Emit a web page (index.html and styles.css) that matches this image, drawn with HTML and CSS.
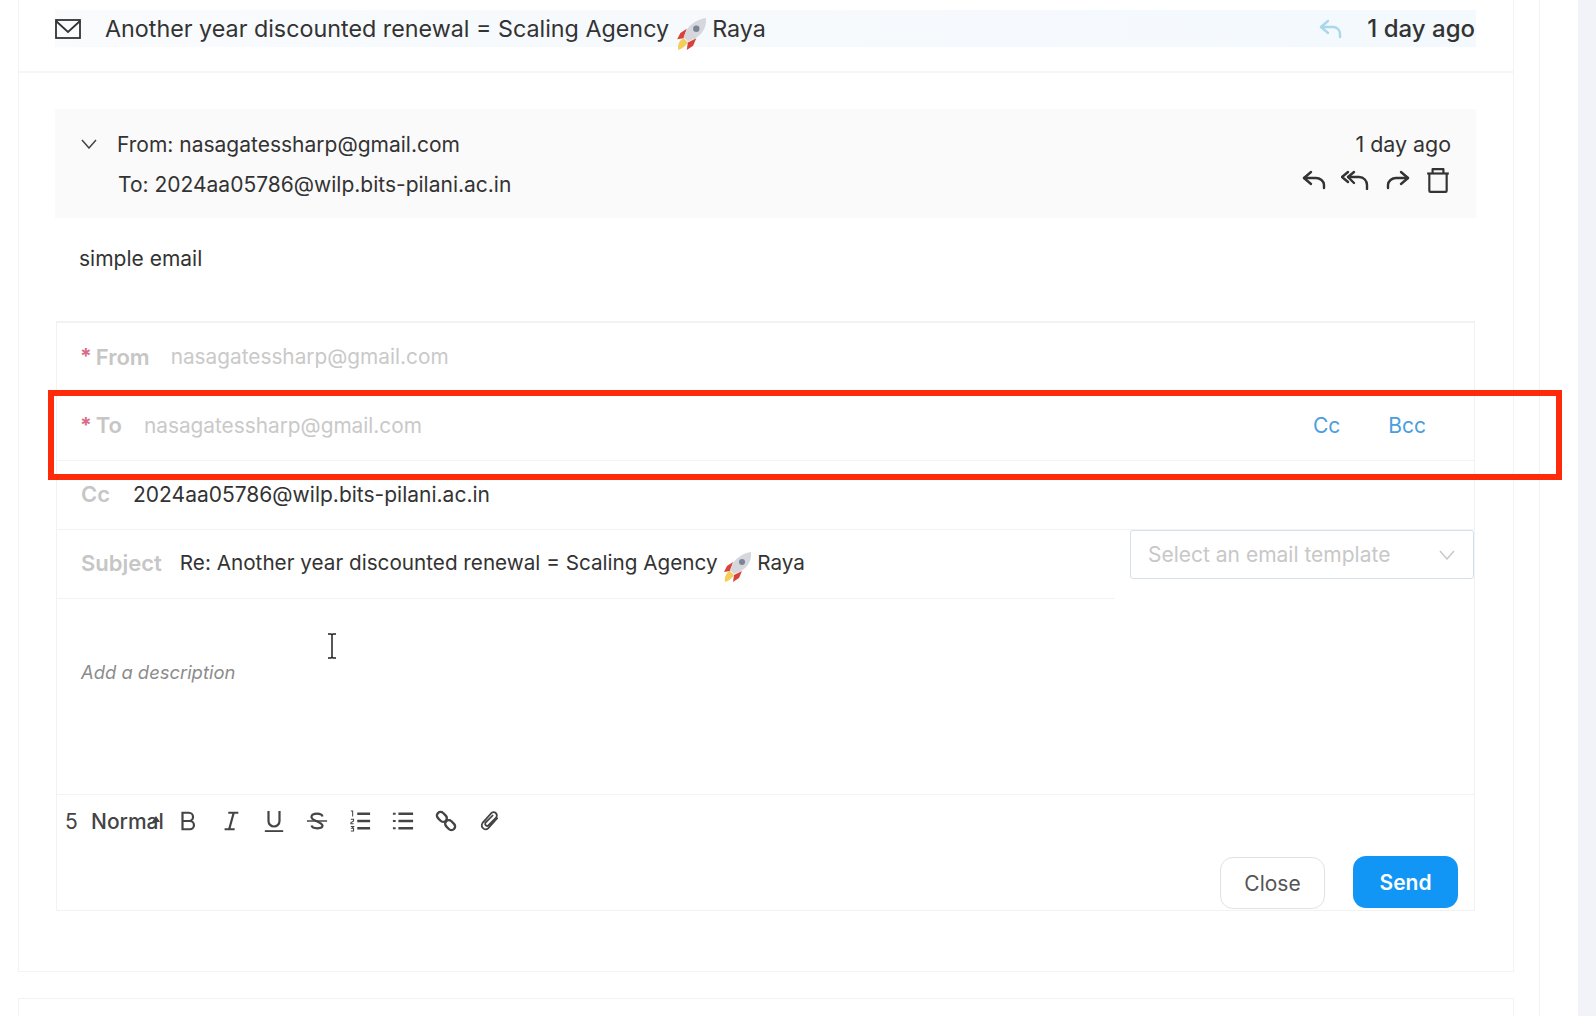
FILE: index.html
```html
<!DOCTYPE html>
<html lang="en">
<head>
    <meta charset="UTF-8">
    <meta name="viewport" content="width=device-width, initial-scale=1.0">
    <title>Email thread</title>
    <link rel="stylesheet" href="styles.css">
</head>
<body>
    <div class="page">
        <main class="thread">
            <section class="card">
                <div class="card-head">
                    <div class="subject-bar">
                        <svg class="mail-icon" viewBox="0 0 26 20" fill="none" stroke="#333" stroke-width="1.800"><rect x="1" y="1" width="24" height="18"/><path d="M1 2l12 11L25 2"/></svg>
                        <span class="subject-text">Another year discounted renewal = Scaling Agency
                            <svg class="rocket" viewBox="0 0 32 32"><path d="M4 31c-1-5 1-9 5-11l4 4c-2 3-5 6-9 7z" fill="#f2cf5b"/><path d="M6 15l6-4-3 9-6 1z" fill="#d9423a"/><path d="M18 27l3-7-8 4-1 7z" fill="#d9423a"/><path d="M30 1c1 8-3 15-10 19l-7 3-4-4 3-7C16 6 23 2 30 1z" fill="#d5d7dd"/><circle cx="21" cy="11" r="3" fill="#7b8494"/></svg>
                            Raya</span>
                        <svg class="reply-faded" viewBox="0 0 24 20" fill="none" stroke="#a9d7ec" stroke-width="2.4" stroke-linecap="round" stroke-linejoin="round"><path d="M9 2L2 8l7 6"/><path d="M2 8h12c4 0 7 3 7 7v3"/></svg>
                        <span class="subject-time">1 day ago</span>
                    </div>
                </div>

                <div class="card-body">
                    <div class="message-meta">
                        <div class="meta-left">
                            <div class="meta-from">
                                <svg class="chevron" viewBox="0 0 16 10" fill="none" stroke="#444" stroke-width="1.5"><path d="M1 1l7 8 7-8"/></svg>
                                <span>From: nasagatessharp@gmail.com</span>
                            </div>
                            <div class="meta-to">To: 2024aa05786@wilp.bits-pilani.ac.in</div>
                        </div>
                        <div class="meta-right">
                            <div class="meta-time">1 day ago</div>
                            <div class="meta-actions">
                                <svg class="reply-icon" viewBox="0 0 24 20" fill="none" stroke="#333" stroke-width="2.4" stroke-linecap="round" stroke-linejoin="round"><path d="M9 2L2 8l7 6"/><path d="M2 8h12c4 0 8 3 8 7v3"/></svg>
                                <svg class="reply-all-icon" viewBox="0 0 28 20" fill="none" stroke="#333" stroke-width="2.4" stroke-linecap="round" stroke-linejoin="round"><path d="M7 2L1 7l6 5"/><path d="M13 2L7 7l6 6"/><path d="M7 7h11c5 0 8 4 8 8v4"/></svg>
                                <svg class="forward-icon" viewBox="0 0 24 20" fill="none" stroke="#333" stroke-width="2.4" stroke-linecap="round" stroke-linejoin="round"><path d="M15 2l7 6-7 6"/><path d="M22 8H10c-4 0-8 3-8 7v3"/></svg>
                                <svg class="trash-icon" viewBox="0 0 22 24" fill="none" stroke="#333" stroke-width="2" stroke-linejoin="round"><path d="M1 6h20"/><path d="M6 6V2h10v4"/><path d="M3 6v16a1 1 0 001 1h14a1 1 0 001-1V6"/></svg>
                            </div>
                        </div>
                    </div>

                    <p class="message-text">simple email</p>

                    <form class="reply-form">
                        <div class="form-row row-from">
                            <span class="req">*</span><label class="form-label label-from">From</label>
                            <span class="placeholder">nasagatessharp@gmail.com</span>
                        </div>
                        <div class="form-row">
                            <span class="req">*</span><label class="form-label label-to">To</label>
                            <span class="placeholder">nasagatessharp@gmail.com</span>
                            <div class="copy-links">
                                <a class="copy-link">Cc</a>
                                <a class="copy-link">Bcc</a>
                            </div>
                        </div>
                        <div class="form-row">
                            <label class="form-label label-cc">Cc</label>
                            <span class="value">2024aa05786@wilp.bits-pilani.ac.in</span>
                        </div>
                        <div class="subject-line">
                            <div class="form-row subject-row">
                                <label class="form-label label-subject">Subject</label>
                                <span class="value subject-value">Re: Another year discounted renewal = Scaling Agency
                                    <svg class="rocket rocket-small" viewBox="0 0 32 32"><path d="M4 31c-1-5 1-9 5-11l4 4c-2 3-5 6-9 7z" fill="#f2cf5b"/><path d="M6 15l6-4-3 9-6 1z" fill="#d9423a"/><path d="M18 27l3-7-8 4-1 7z" fill="#d9423a"/><path d="M30 1c1 8-3 15-10 19l-7 3-4-4 3-7C16 6 23 2 30 1z" fill="#d5d7dd"/><circle cx="21" cy="11" r="3" fill="#7b8494"/></svg>
                                    Raya</span>
                            </div>
                            <div class="template-select">
                                <span>Select an email template</span>
                                <svg class="select-arrow" viewBox="0 0 16 10" fill="none" stroke="#c8c8c8" stroke-width="1.5"><path d="M1 1l7 8 7-8"/></svg>
                            </div>
                        </div>
                        <div class="editor"><em>Add a description</em></div>
                        <div class="toolbar">
                            <span class="tool-size">5</span>
                            <span class="tool-format">Normal<svg class="format-arrow" viewBox="0 0 10 8"><path d="M1 7l4-6 4 6z" fill="#444"/></svg></span>
                            <svg class="tool" viewBox="0 0 24 24" fill="none" stroke="#444" stroke-width="2.4"><path d="M6 3h7a4.500 4.500 0 010 9H6zM6 12h8a4.500 4.500 0 010 9H6z"/></svg>
                            <svg class="tool" viewBox="0 0 24 24" fill="none" stroke="#444" stroke-width="2.4"><path d="M9 3h11M5 21h11M15 3l-5 18"/></svg>
                            <svg class="tool" viewBox="0 0 24 24" fill="none" stroke="#444" stroke-width="2.4"><path d="M6 1v11a6 6 0 0012 0V1"/><path d="M2 23h20" stroke-width="2"/></svg>
                            <svg class="tool" viewBox="0 0 24 24" fill="none" stroke="#444" stroke-width="2.4"><path d="M18 7c-1-4-11-4-12 0-1 5 11 5 12 10 0 4-11 4-12 0"/><path d="M1 12h22" stroke-width="1.600"/></svg>
                            <svg class="tool" viewBox="0 0 24 24" fill="none" stroke="#444"><path d="M9 4h14M9 12h14M9 20h14" stroke-width="2.800"/><path d="M2 1h2v6M2 10h3v2l-3 2v1h3M2 18h3l-2 2h2v3H2" stroke-width="1.100"/></svg>
                            <svg class="tool" viewBox="0 0 24 24" fill="none" stroke="#444"><path d="M7 4h16M7 12h16M7 20h16" stroke-width="2.800"/><path d="M1 4h3M1 12h3M1 20h3" stroke-width="2.200"/></svg>
                            <svg class="tool" viewBox="0 0 24 24" fill="none" stroke="#444" stroke-width="2.600"><rect x="1.500" y="3.500" width="12" height="8" rx="4" transform="rotate(45 7.500 7.500)"/><rect x="10.500" y="12.500" width="12" height="8" rx="4" transform="rotate(45 16.500 16.500)"/></svg>
                            <svg class="tool" viewBox="0 0 24 24" fill="none" stroke="#444" stroke-width="1.900" stroke-linecap="round"><path d="M21 9L11 20c-3 3-9-1-6-6L15 3c3-2 7 1 5 5l-9 9c-1 1-4 0-3-3l8-8"/></svg>
                        </div>
                        <div class="form-actions">
                            <button type="button" class="close-btn">Close</button>
                            <button type="button" class="send-btn">Send</button>
                        </div>
                    </form>
                </div>
            </section>
            <section class="card next-card"></section>
        </main>
        <div class="side-strip"></div>
        <div class="side-gutter"></div>
    </div>

    <div class="highlight-box"></div>
    <svg class="text-cursor" viewBox="0 0 12 26" fill="none" stroke="#222" stroke-width="1.500"><path d="M2 1h3l1 1 1-1h3M6 2v22M2 25h3l1-1 1 1h3"/></svg>
</body>
</html>
```

FILE: styles.css
```css
* {
    margin: 0;
    padding: 0;
    box-sizing: border-box;
}

html, body {
    height: 100%;
    overflow: hidden;
}

body {
    font-family: Inter, "Liberation Sans", sans-serif;
    background: #ffffff;
    color: #333333;
    position: relative;
}

.page {
    display: flex;
    height: 1016px;
    padding-left: 18px;
}

.thread {
    width: 1496px;
    flex-shrink: 0;
}

.card {
    border: 1px solid #f3f3f5;
    border-top: none;
    height: 972px;
}

.next-card {
    margin-top: 26px;
    height: 18px;
    border-top: 1px solid #f3f3f5;
    border-bottom: none;
}

.side-strip {
    width: 26px;
    border-right: 1px solid #f1f2f5;
}

.side-gutter {
    flex: 1;
    margin-left: 38px;
    background: #f1f3f8;
}

.card-head {
    height: 73px;
    padding: 10px 37px 0 36px;
    border-bottom: 2px solid #f5f5f6;
}

.subject-bar {
    display: flex;
    align-items: center;
    height: 37px;
    background: linear-gradient(90deg, #f9fbfd, #f4f9fd 90%);
    font-size: 23.3px;
    line-height: 37px;
}

.mail-icon {
    width: 26px;
    height: 20px;
    flex-shrink: 0;
}

.subject-text {
    margin-left: 24px;
    flex: 1;
    white-space: nowrap;
}

.rocket {
    width: 34px;
    height: 34px;
    margin: -6px -2px;
    vertical-align: -8px;
}

.reply-faded {
    width: 24px;
    height: 20px;
    margin-right: 24px;
}

.subject-time {
    font-size: 24px;
    font-weight: 500;
    padding-right: 1px;
}

.card-body {
    padding: 36px 37px 0 36px;
}

.message-meta {
    display: flex;
    justify-content: space-between;
    height: 109px;
    padding: 22px 25px 0 26px;
    background: #fafafa;
    font-size: 21px;
}

.meta-from {
    display: flex;
    align-items: center;
    gap: 20px;
    height: 26px;
}

.chevron {
    width: 16px;
    height: 10px;
}

.meta-to {
    margin-top: 15px;
    padding-left: 37px;
    height: 26px;
}

.meta-time {
    text-align: right;
    height: 26px;
    font-size: 21.4px;
}

.meta-actions {
    display: flex;
    align-items: center;
    margin-top: 10px;
    padding-right: 1px;
}

.reply-icon, .forward-icon {
    width: 24px;
    height: 20px;
}

.reply-all-icon {
    width: 28px;
    height: 20px;
    margin: 0 17px 0 15px;
}

.trash-icon {
    width: 24px;
    height: 26px;
    margin-left: 16px;
}

.message-text {
    height: 103px;
    padding: 28px 0 0 24px;
    font-size: 21px;
    line-height: 26px;
}

.reply-form {
    border: 1px solid #f2f2f3;
    border-top-width: 2px;
    margin: 0 1px;
    height: 590px;
    font-size: 21px;
}

.form-row {
    display: flex;
    align-items: center;
    height: 69px;
    padding: 0 24px 2px;
    border-bottom: 1px solid #f3f3f4;
    white-space: nowrap;
}

.row-from {
    border-bottom: none;
}

.req {
    color: #d96a88;
    font-weight: 700;
    margin: 0 4px 0 -1px;
}

.form-label {
    font-size: 22px;
    font-weight: 600;
    color: #c6c6c6;
}

.label-from {
    margin-right: 21px;
}

.label-to {
    margin-right: 22px;
}

.label-cc {
    margin-right: 23px;
}

.label-subject {
    margin-right: 18px;
}

.placeholder {
    color: #c9c9c9;
    font-size: 20.8px;
}

.value {
    display: block;
    color: #333333;
}

.subject-value {
    font-size: 20.7px;
}

.copy-links {
    display: flex;
    gap: 48px;
    margin-left: auto;
    padding-right: 24px;
    color: #4a9ede;
}

.subject-line {
    display: flex;
    justify-content: space-between;
}

.subject-row {
    width: 1058px;
}

.rocket-small {
    width: 32px;
    height: 32px;
    vertical-align: -7px;
}

.template-select {
    display: flex;
    align-items: center;
    justify-content: space-between;
    width: 344px;
    height: 49px;
    padding: 0 18px 0 17px;
    border: 1px solid #d5e0ea;
    border-radius: 3px;
    color: #c8c8c8;
}

.select-arrow {
    width: 16px;
    height: 10px;
}

.editor {
    height: 196px;
    padding: 60px 0 0 24px;
    border-bottom: 1px solid #f3f3f4;
    color: #8c8c8c;
    font-size: 18.4px;
    line-height: 26px;
}

.toolbar {
    display: flex;
    align-items: center;
    height: 52px;
    padding-left: 8px;
    color: #444444;
}

.tool-size {
    width: 26px;
}

.tool-format {
    position: relative;
    width: 86px;
    font-weight: 500;
}

.format-arrow {
    position: absolute;
    left: 60px;
    top: 6px;
    width: 10px;
    height: 8px;
}

.tool {
    width: 22px;
    height: 22px;
    margin-right: 21px;
}

.form-actions {
    display: flex;
    justify-content: flex-end;
    gap: 28px;
    padding-right: 16px;
    margin-top: 10px;
}

.close-btn, .send-btn {
    width: 105px;
    height: 52px;
    border-radius: 13px;
    font-family: inherit;
    font-size: 21px;
}

.close-btn {
    background: #ffffff;
    border: 1px solid #e2e2e2;
    color: #555555;
}

.send-btn {
    background: #1296f6;
    border: none;
    color: #ffffff;
    font-weight: 600;
    margin-top: -1px;
}

.highlight-box {
    position: absolute;
    left: 48px;
    top: 390px;
    width: 1514px;
    height: 90px;
    border: 6px solid #ff2a0a;
}

.text-cursor {
    position: absolute;
    left: 326px;
    top: 633px;
    width: 12px;
    height: 26px;
}
```
